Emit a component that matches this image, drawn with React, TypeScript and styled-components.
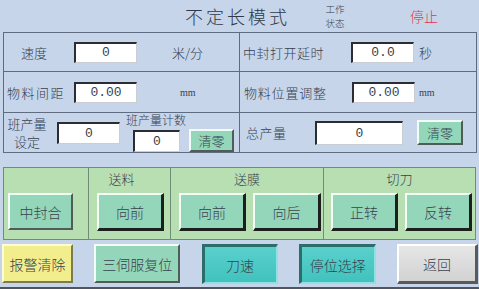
import styled, { createGlobalStyle, css } from 'styled-components';

const GlobalStyle = createGlobalStyle`
  html, body {
    margin: 0;
    padding: 0;
    background: #c6d5ea;
  }
  body {
    font-family: "Noto Sans CJK SC", "Noto Sans", sans-serif;
    color: #36404f;
  }
`;

type Tone = 'green' | 'greenDeep' | 'yellow' | 'teal' | 'grey';

const tones: Record<Tone, ReturnType<typeof css>> = {
  green: css`
    background: #94d6ba;
    border-top: 2px solid #f2fbf6;
    border-left: 2px solid #f2fbf6;
    border-bottom: 2px solid #4f5d56;
    border-right: 2px solid #4f5d56;
  `,
  greenDeep: css`
    background: #94d6ba;
    border-top: 2px solid #f4fcf8;
    border-left: 2px solid #f4fcf8;
    border-bottom: 3px solid #1b1f1d;
    border-right: 3px solid #1b1f1d;
  `,
  yellow: css`
    background: #f3ee8d;
    border-top: 2px solid #fffbd4;
    border-left: 2px solid #fffbd4;
    border-bottom: 2px solid #7d7b52;
    border-right: 2px solid #7d7b52;
  `,
  teal: css`
    background: linear-gradient(180deg, #5ad0cc 0%, #41c2be 100%);
    border-top: 3px solid #2c6c6a;
    border-left: 3px solid #2c6c6a;
    border-bottom: 2px solid #8ee3e0;
    border-right: 2px solid #8ee3e0;
  `,
  grey: css`
    background: linear-gradient(180deg, #e6e6e6 0%, #d2d2d2 100%);
    border-top: 2px solid #ffffff;
    border-left: 2px solid #ffffff;
    border-bottom: 3px solid #5a5a5a;
    border-right: 3px solid #5a5a5a;
  `,
};

const Screen = styled.div`
  width: 479px;
  height: 289px;
  box-sizing: border-box;
  background: #c6d5ea;
  border-bottom: 2px solid #4f5560;
  display: flex;
  flex-direction: column;
  overflow: hidden;
`;

const Header = styled.div`
  height: 32px;
  display: flex;
  align-items: center;
`;

const Title = styled.div`
  margin-left: 185px;
  width: 110px;
  font-size: 18px;
  letter-spacing: 3px;
  font-weight: 300;
  color: #2f3848;
  white-space: nowrap;
`;

const Status = styled.div`
  margin-left: 27px;
  display: flex;
  flex-direction: column;
  align-items: center;
  gap: 4px;
  width: 26px;
`;

const StatusLine = styled.span`
  font-size: 9.5px;
  line-height: 10px;
  font-weight: 300;
`;

const StopText = styled.div`
  margin-left: 62px;
  font-size: 14px;
  color: #e8334f;
  font-weight: 300;
`;

const TopPanel = styled.div`
  margin: 0 3px;
  width: 474px;
  box-sizing: border-box;
  border: 1px solid #5e6b80;
  display: grid;
  grid-template-columns: 236px 1fr;
  grid-template-rows: 39px 41px 39px;
`;

const Cell = styled.div<{ $left?: boolean; $last?: boolean; $pad: number }>`
  display: flex;
  align-items: center;
  padding-left: ${(p) => p.$pad}px;
  border-right: ${(p) => (p.$left ? '1px solid #5e6b80' : 'none')};
  border-bottom: ${(p) => (p.$last ? 'none' : '1px solid #5e6b80')};
  box-sizing: border-box;
`;

const Label = styled.div<{ $w: number; $spacing?: number }>`
  width: ${(p) => p.$w}px;
  flex: none;
  font-size: 13px;
  font-weight: 300;
  letter-spacing: ${(p) => p.$spacing ?? 0}px;
  white-space: nowrap;
`;

const StackLabel = styled.div`
  width: 40px;
  flex: none;
  display: flex;
  flex-direction: column;
  align-items: center;
  gap: 3px;
`;

const StackLine = styled.span`
  font-size: 13px;
  line-height: 15px;
  font-weight: 300;
`;

const Unit = styled.div<{ $ml: number; $small?: boolean }>`
  margin-left: ${(p) => p.$ml}px;
  font-size: ${(p) => (p.$small ? '10px' : '13px')};
  font-family: ${(p) => (p.$small ? '"Liberation Serif", serif' : 'inherit')};
  font-weight: 300;
`;

const ValueBox = styled.div<{ $w: number; $h: number; $ml?: number }>`
  width: ${(p) => p.$w}px;
  height: ${(p) => p.$h}px;
  margin-left: ${(p) => p.$ml ?? 0}px;
  flex: none;
  box-sizing: border-box;
  background: #ffffff;
  border-top: 2px solid #2a2d33;
  border-left: 2px solid #2a2d33;
  border-bottom: 1px solid #c9cdd4;
  border-right: 1px solid #c9cdd4;
  display: flex;
  align-items: center;
  justify-content: center;
  font-family: "Liberation Mono", monospace;
  font-size: 13px;
  color: #3a3f47;
`;

const Counter = styled.div`
  display: flex;
  flex-direction: column;
  margin-left: 6px;
  align-self: stretch;
`;

const CounterLabel = styled.div`
  font-size: 12px;
  line-height: 14px;
  font-weight: 300;
  white-space: nowrap;
`;

const CounterRow = styled.div`
  display: flex;
  align-items: center;
  margin-top: 2px;
`;

const Btn = styled.div<{ $tone: Tone; $w: number; $h: number; $ml?: number; $fs?: number }>`
  width: ${(p) => p.$w}px;
  height: ${(p) => p.$h}px;
  margin-left: ${(p) => p.$ml ?? 0}px;
  flex: none;
  box-sizing: border-box;
  display: flex;
  align-items: center;
  justify-content: center;
  font-size: ${(p) => p.$fs ?? 14}px;
  font-weight: 300;
  color: #38424f;
  white-space: nowrap;
  ${(p) => tones[p.$tone]}
`;

const GreenPanel = styled.div`
  margin: 14px 0 0 3px;
  width: 473px;
  height: 73px;
  box-sizing: border-box;
  background: #b8dfb2;
  border: 1px solid #6f8d76;
  display: grid;
  grid-template-columns: 84px 82px 153px 1fr;
`;

const Section = styled.div<{ $first?: boolean }>`
  display: flex;
  flex-direction: column;
  border-left: ${(p) => (p.$first ? 'none' : '1px solid #6f8d76')};
`;

const SectionTitle = styled.div<{ $shift?: number }>`
  height: 25px;
  line-height: 22px;
  text-align: center;
  font-size: 13px;
  font-weight: 300;
  padding-right: ${(p) => p.$shift ?? 0}px;
`;

const SectionRow = styled.div<{ $pad: number }>`
  display: flex;
  padding-left: ${(p) => p.$pad}px;
  gap: 7px;
`;

const BottomBar = styled.div`
  margin-top: 4px;
  padding: 0 1px 0 2px;
  display: flex;
  justify-content: space-between;
`;

export default function App() {
  return (
    <>
      <GlobalStyle />
      <Screen>
        <Header>
          <Title>不定长模式</Title>
          <Status>
            <StatusLine>工作</StatusLine>
            <StatusLine>状态</StatusLine>
          </Status>
          <StopText>停止</StopText>
        </Header>

        <TopPanel>
          <Cell $left $pad={17}>
            <Label $w={53}>速度</Label>
            <ValueBox $w={63} $h={21}>0</ValueBox>
            <Unit $ml={35}>米/分</Unit>
          </Cell>
          <Cell $pad={3}>
            <Label $w={108} $spacing={0.5}>中封打开延时</Label>
            <ValueBox $w={63} $h={21}>0.0</ValueBox>
            <Unit $ml={5}>秒</Unit>
          </Cell>

          <Cell $left $pad={3}>
            <Label $w={67} $spacing={1.5}>物料间距</Label>
            <ValueBox $w={63} $h={21}>0.00</ValueBox>
            <Unit $ml={43} $small>mm</Unit>
          </Cell>
          <Cell $pad={4}>
            <Label $w={108} $spacing={0.8}>物料位置调整</Label>
            <ValueBox $w={63} $h={21}>0.00</ValueBox>
            <Unit $ml={4} $small>mm</Unit>
          </Cell>

          <Cell $left $last $pad={3}>
            <StackLabel>
              <StackLine>班产量</StackLine>
              <StackLine>设定</StackLine>
            </StackLabel>
            <ValueBox $w={63} $h={22} $ml={10}>0</ValueBox>
            <Counter>
              <CounterLabel>班产量计数</CounterLabel>
              <CounterRow>
                <ValueBox $w={47} $h={22} $ml={7}>0</ValueBox>
                <Btn $tone="green" $w={45} $h={23} $ml={9} $fs={13}>清零</Btn>
              </CounterRow>
            </Counter>
          </Cell>
          <Cell $last $pad={6}>
            <Label $w={69} $spacing={0.5}>总产量</Label>
            <ValueBox $w={88} $h={24}>0</ValueBox>
            <Btn $tone="green" $w={46} $h={25} $ml={14} $fs={13}>清零</Btn>
          </Cell>
        </TopPanel>

        <GreenPanel>
          <Section $first>
            <SectionTitle />
            <SectionRow $pad={4}>
              <Btn $tone="green" $w={65} $h={37}>中封合</Btn>
            </SectionRow>
          </Section>
          <Section>
            <SectionTitle $shift={16}>送料</SectionTitle>
            <SectionRow $pad={8}>
              <Btn $tone="greenDeep" $w={67} $h={38}>向前</Btn>
            </SectionRow>
          </Section>
          <Section>
            <SectionTitle>送膜</SectionTitle>
            <SectionRow $pad={8}>
              <Btn $tone="greenDeep" $w={67} $h={38}>向前</Btn>
              <Btn $tone="greenDeep" $w={68} $h={38}>向后</Btn>
            </SectionRow>
          </Section>
          <Section>
            <SectionTitle>切刀</SectionTitle>
            <SectionRow $pad={7}>
              <Btn $tone="greenDeep" $w={67} $h={38}>正转</Btn>
              <Btn $tone="greenDeep" $w={67} $h={38}>反转</Btn>
            </SectionRow>
          </Section>
        </GreenPanel>

        <BottomBar>
          <Btn $tone="yellow" $w={71} $h={39}>报警清除</Btn>
          <Btn $tone="green" $w={86} $h={39}>三伺服复位</Btn>
          <Btn $tone="teal" $w={76} $h={40}>刀速</Btn>
          <Btn $tone="teal" $w={77} $h={40}>停位选择</Btn>
          <Btn $tone="grey" $w={81} $h={40}>返回</Btn>
        </BottomBar>
      </Screen>
    </>
  );
}
